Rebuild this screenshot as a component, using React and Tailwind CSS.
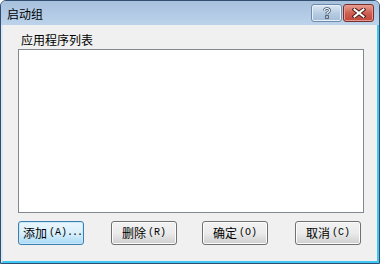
const cjk = "font-['Noto_Sans_CJK_SC',sans-serif]"

function Btn({ label, hot, rest, focused }) {
  return (
    <button
      className={`flex h-[24px] w-[66px] shrink-0 items-center whitespace-nowrap rounded-[3px] border text-[12px] leading-none text-black ${
        focused
          ? 'justify-start border-[#3c7fb1] bg-gradient-to-b from-[#eaf6fd] via-[#d9f0fc] to-[#a7d9f5] pl-[4px] shadow-[inset_0_0_0_1px_#c8e7f8]'
          : 'justify-center border-[#707070] bg-gradient-to-b from-[#f2f2f2] via-[#ebebeb] to-[#cfcfcf] shadow-[inset_0_0_0_1px_#fcfcfc]'
      }`}
    >
      <span className={`${cjk} shrink-0`}>{label}</span>
      <span className="ml-[2px] shrink-0 font-['Liberation_Mono',monospace] text-[10px]">({hot})</span>
      {rest && <span className="shrink-0 font-['Liberation_Mono',monospace] text-[10px] tracking-[-1px]">{rest}</span>}
    </button>
  )
}

export default function App() {
  return (
    <div className="flex h-[264px] w-[380px] flex-col overflow-hidden rounded-t-[6px] border border-[#304e70] bg-[#c8dcf0]">
      <div className="flex h-[24px] shrink-0 items-center bg-gradient-to-b from-[#a7c0dc] to-[#bcd3eb] pl-[6px] pr-[5px]">
        <div className={`${cjk} flex-1 pt-[2px] text-[12px] text-black`}>启动组</div>
        <div className="flex h-[18px] w-[31px] items-center justify-center rounded-[3px] border border-[#6d8aab] bg-gradient-to-b from-[#dce8f4] via-[#b8cde3] to-[#a3bcd8] shadow-[inset_0_0_0_1px_#e8f0f8]">
          <svg width="10" height="12" viewBox="0 0 10 12">
            <path d="M2.5 3.5 Q2.5 1.5 5 1.5 Q7.5 1.5 7.5 3.5 Q7.5 5 5 6 L5 7.5" fill="none" stroke="#3a4f66" strokeWidth="2.6" />
            <path d="M2.5 3.5 Q2.5 1.5 5 1.5 Q7.5 1.5 7.5 3.5 Q7.5 5 5 6 L5 7.5" fill="none" stroke="#fff" strokeWidth="1.2" />
            <rect x="3.7" y="8.7" width="2.6" height="2.6" fill="#fff" stroke="#3a4f66" strokeWidth="1" />
          </svg>
        </div>
        <div className="ml-[1px] flex h-[18px] w-[31px] items-center justify-center rounded-[3px] border border-[#7a2e2a] bg-gradient-to-b from-[#e8a093] via-[#cf5f52] to-[#c0463a] shadow-[inset_0_0_0_1px_#e79a8f]">
          <svg width="14" height="10" viewBox="0 0 14 10">
            <path d="M2.5 1.5 L11.5 8.5 M11.5 1.5 L2.5 8.5" stroke="#4a1a16" strokeWidth="4" strokeLinecap="square" />
            <path d="M2.5 1.5 L11.5 8.5 M11.5 1.5 L2.5 8.5" stroke="#fff" strokeWidth="2" strokeLinecap="square" />
          </svg>
        </div>
      </div>
      <div className="flex flex-1 flex-col border-b-2 border-l-2 border-r-2 border-b-[#3fc6f2] border-l-[#dbe9f6] border-r-[#3fc6f2] bg-[#f0f0f0] pl-[15px] pr-[14px] pt-[6px]">
        <div className={`${cjk} h-[18px] pl-[3px] text-[12px] leading-[18px] text-black`}>应用程序列表</div>
        <div className="h-[164px] w-[346px] border border-[#828790] bg-white" />
        <div className="mt-[8px] flex items-center">
          <Btn label="添加" hot="A" rest="..." focused />
          <div className="ml-[27px]"><Btn label="删除" hot="R" /></div>
          <div className="ml-[25px]"><Btn label="确定" hot="O" /></div>
          <div className="ml-[27px]"><Btn label="取消" hot="C" /></div>
        </div>
      </div>
    </div>
  )
}
